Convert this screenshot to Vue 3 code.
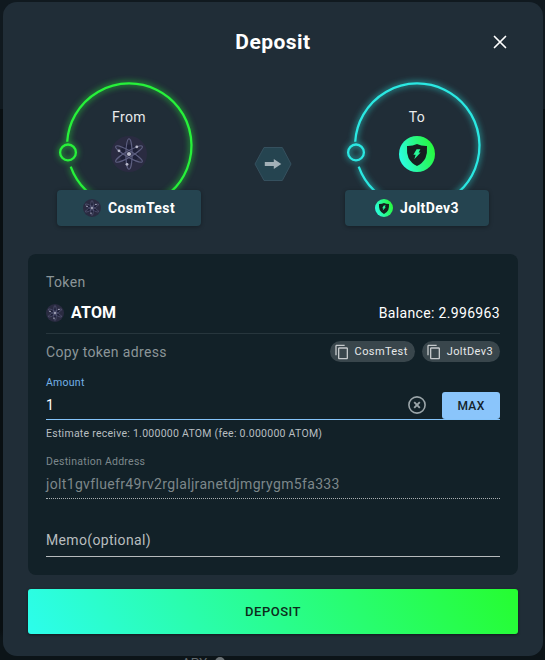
<script setup>
import { ref } from 'vue'

const ends = [
  { side: 'From', name: 'CosmTest', icon: 'atom', tone: 'green' },
  { side: 'To', name: 'JoltDev3', icon: 'jolt', tone: 'cyan' },
]
const amount = ref('1')
</script>

<template>
  <div class="page">
    <svg class="defs" width="0" height="0" aria-hidden="true">
      <defs>
        <linearGradient id="jolt-fill" x1="0" y1=".65" x2="1" y2=".35">
          <stop offset="0" stop-color="#2bfde6" />
          <stop offset=".5" stop-color="#28f98a" />
          <stop offset="1" stop-color="#27f93a" />
        </linearGradient>
        <symbol id="atom" viewBox="0 0 36 36">
          <circle cx="18" cy="18" r="18" fill="#2a2b41" />
          <circle cx="18" cy="18" r="9.500" fill="#1e2038" />
          <g fill="none" stroke="#5d5f80" stroke-width="1.100">
            <ellipse cx="18" cy="18" rx="3.1" ry="15.3" />
            <ellipse cx="18" cy="18" rx="3.1" ry="15.3" transform="rotate(60 18 18)" />
            <ellipse cx="18" cy="18" rx="3.1" ry="15.3" transform="rotate(120 18 18)" />
          </g>
          <circle cx="18" cy="18" r="2.1" fill="#b9bacb" />
          <circle cx="25.8" cy="10.8" r="1.4" fill="#b9bacb" />
          <circle cx="8" cy="14.8" r="1.4" fill="#b9bacb" />
          <circle cx="16" cy="28.3" r="1.4" fill="#b9bacb" />
        </symbol>
        <symbol id="jolt" viewBox="0 0 36 36">
          <circle cx="18" cy="18" r="18" fill="url(#jolt-fill)" />
          <path d="M18 8 Q22.5 10.2 28 10 Q28.5 17 26.5 22 Q24 27 18 30 Q12 27 9.500 22 Q7.500 17 8 10 Q13.500 10.200 18 8Z" fill="#15201f" />
          <path d="M17.600 13.200h3.800l-1.800 3.300h2l-6.300 6.700 1.400-4.500h-2.300z" fill="#28f998" />
        </symbol>
      </defs>
    </svg>
    <p class="behind">APY <span class="coin"></span></p>
    <main class="dialog">
      <header class="head">
        <h1>Deposit</h1>
        <button class="close" aria-label="Close">
          <svg width="14" height="14" viewBox="0 0 14 14"><path d="M1.500 1.500l11 11M12.500 1.500l-11 11" stroke="#fff" stroke-width="1.700" stroke-linecap="round" /></svg>
        </button>
      </header>

      <section class="route">
        <template v-for="(end, i) in ends" :key="end.side">
          <svg v-if="i" class="arrow" width="38" height="36" viewBox="0 0 38 36">
            <path d="M10 1.500h18.300L37 18l-8.700 16.500H10L1 18z" fill="#254450" stroke="#35505e" />
            <path d="M10.800 16h9v-3l7.500 5-7.500 5v-3h-9z" fill="#a2b0b7" />
          </svg>
          <div class="end" :class="end.tone">
            <svg class="ring" width="144" height="116" viewBox="0 0 144 116">
              <path d="M10.200 67A62.200 62.200 0 1 1 13.700 91.900" fill="none" />
              <circle cx="11" cy="78.400" r="7.900" fill="none" />
            </svg>
            <span class="side">{{ end.side }}</span>
            <svg class="mark" width="36" height="36"><use :href="'#' + end.icon" /></svg>
            <div class="chain">
              <svg width="18" height="18"><use :href="'#' + end.icon" /></svg>
              <b>{{ end.name }}</b>
            </div>
          </div>
        </template>
      </section>

      <section class="panel">
        <div class="caption">Token</div>
        <div class="token">
          <svg width="18" height="18"><use href="#atom" /></svg>
          <b>ATOM</b>
          <span class="balance">Balance: 2.996963</span>
        </div>
        <div class="copy">
          <span>Copy token adress</span>
          <button v-for="end in ends" :key="end.name" class="chip">
            <svg width="16" height="16" viewBox="0 0 24 24" fill="currentColor"><path d="M16 1H4c-1.100 0-2 .900-2 2v14h2V3h12V1zm3 4H8c-1.100 0-2 .900-2 2v14c0 1.100.900 2 2 2h11c1.100 0 2-.900 2-2V7c0-1.100-.900-2-2-2zm0 16H8V7h11v14z" /></svg>
            {{ end.name }}
          </button>
        </div>
        <label class="amount-label">Amount</label>
        <div class="amount">
          <input v-model="amount" aria-label="Amount" />
          <svg class="clear" width="18" height="18" viewBox="0 0 18 18" fill="none" stroke="#9ba5a9"><circle cx="9" cy="9" r="8.100" stroke-width="1.600" /><path d="M6.200 6.200l5.600 5.600M11.800 6.200l-5.600 5.600" stroke-width="1.900" /></svg>
          <button class="max">MAX</button>
        </div>
        <div class="estimate">Estimate receive: 1.000000 ATOM (fee: 0.000000 ATOM)</div>
        <label class="dest-label">Destination Address</label>
        <div class="dest">jolt1gvfluefr49rv2rglaljranetdjmgrygm5fa333</div>
        <div class="memo">Memo(optional)</div>
      </section>
      <button class="deposit">DEPOSIT</button>
    </main>
  </div>
</template>

<style>
body { background: #0d151a; }
</style>

<style scoped>
* { box-sizing: border-box; }
.page {
  position: relative;
  height: 660px;
  padding: 2px 2px 4px 3px;
  overflow: hidden;
  background: linear-gradient(#10191f 0 109px, #090f12 109px 630px, #0c1418 638px);
  font: 14px Roboto, sans-serif;
  letter-spacing: .34px;
  color: #fff;
}
.defs { position: absolute; }
.behind {
  position: absolute;
  left: 182px;
  top: 655px;
  margin: 0;
  font-size: 13px;
  line-height: 16px;
  color: #626a6e;
}
.coin {
  display: inline-block;
  width: 10px;
  height: 10px;
  margin-left: 4px;
  border-radius: 50%;
  background: #6b7275;
}
button, input {
  padding: 0;
  border: 0;
  font: inherit;
  letter-spacing: inherit;
  color: inherit;
  background: none;
}
.dialog {
  position: relative;
  height: 654px;
  padding: 0 25px;
  border-radius: 14px;
  background: #202d37;
}
.head {
  display: grid;
  grid-template-columns: 1fr auto 1fr;
  align-items: center;
  height: 72px;
  padding-top: 8px;
}
h1 {
  grid-column: 2;
  margin: 0;
  font-size: 21px;
  font-weight: 700;
  line-height: 28px;
  letter-spacing: .45px;
}
.close {
  justify-self: end;
  display: flex;
  margin-right: 11px;
}
.route {
  display: flex;
  justify-content: space-between;
  align-items: flex-start;
  padding: 0 29px;
  height: 180px;
}
.arrow { margin-top: 72px; }
.end {
  position: relative;
  display: flex;
  flex-direction: column;
  align-items: center;
  width: 144px;
  padding-top: 33px;
}
.ring {
  position: absolute;
  left: 0;
  top: 0;
  overflow: visible;
  stroke: var(--tone);
  stroke-width: 2.3;
  filter: drop-shadow(0 0 3px var(--tone));
}
.ring path { transform: translateY(.7px); }
.green { --tone: #27f13a; }
.cyan { --tone: #2be8e2; }
.side { line-height: 20px; color: #e9ebec; }
.mark { margin-top: 9px; }
.chain {
  position: relative;
  display: flex;
  align-items: center;
  justify-content: center;
  gap: 7px;
  width: 144px;
  height: 36px;
  margin-top: 18px;
  border-radius: 4px;
  background: #254450;
  box-shadow: 0 1px 4px #0005;
}
.chain b { line-height: 20px; padding-bottom: 1px; letter-spacing: .4px; }
.panel {
  height: 321px;
  padding: 18px;
  border-radius: 8px;
  background: #122128;
}
.caption { line-height: 20px; color: #8b9598; }
.token {
  display: flex;
  align-items: center;
  height: 42px;
  border-bottom: 1px solid #27363d;
}
.token b { margin-left: 7px; font-size: 16px; letter-spacing: .2px; }
.balance { margin-left: auto; }
.copy {
  display: flex;
  align-items: center;
  gap: 7px;
  height: 35px;
  color: #8b9598;
}
.copy span { margin-right: auto; }
.chip {
  display: flex;
  align-items: center;
  gap: 5px;
  height: 21px;
  padding: 0 7px 0 4px;
  border-radius: 11px;
  font-size: 11px;
  letter-spacing: .4px;
  color: #e7e9ea;
  background: #39464c;
}
.chip svg { color: #c4c8ca; }
.amount-label, .dest-label, .estimate {
  display: block;
  font-size: 10.5px;
  line-height: 16px;
  letter-spacing: .26px;
  color: #7d888c;
}
.amount-label { margin-top: 6px; color: #74b1e7; }
.amount {
  display: flex;
  align-items: center;
  height: 29px;
  border-bottom: 1px solid #85c4fa;
}
.amount input { flex: 1; min-width: 0; outline: none; }
.clear { margin-right: 16px; }
.max {
  align-self: flex-end;
  width: 58px;
  height: 27px;
  border-radius: 3px;
  font-size: 12px;
  font-weight: 500;
  color: #14222a;
  background: #8ac5fb;
}
.estimate {
  margin-top: 6px;
  color: #b8bec0;
}
.dest-label { margin-top: 12px; }
.dest {
  height: 29px;
  line-height: 28px;
  border-bottom: 1px dotted #aab0b3;
  color: #7d878a;
}
.memo {
  height: 58px;
  padding-top: 31px;
  line-height: 20px;
  border-bottom: 1px solid #b6bbbd;
  color: #b8bdbf;
}
.deposit {
  width: 100%;
  height: 45px;
  margin-top: 14px;
  border-radius: 3px;
  font-size: 13px;
  font-weight: 500;
  letter-spacing: .5px;
  color: #0d2a1b;
  background: linear-gradient(60deg, #2cfdec, #26fd30);
  box-shadow: 0 1px 3px #0007;
}
</style>
